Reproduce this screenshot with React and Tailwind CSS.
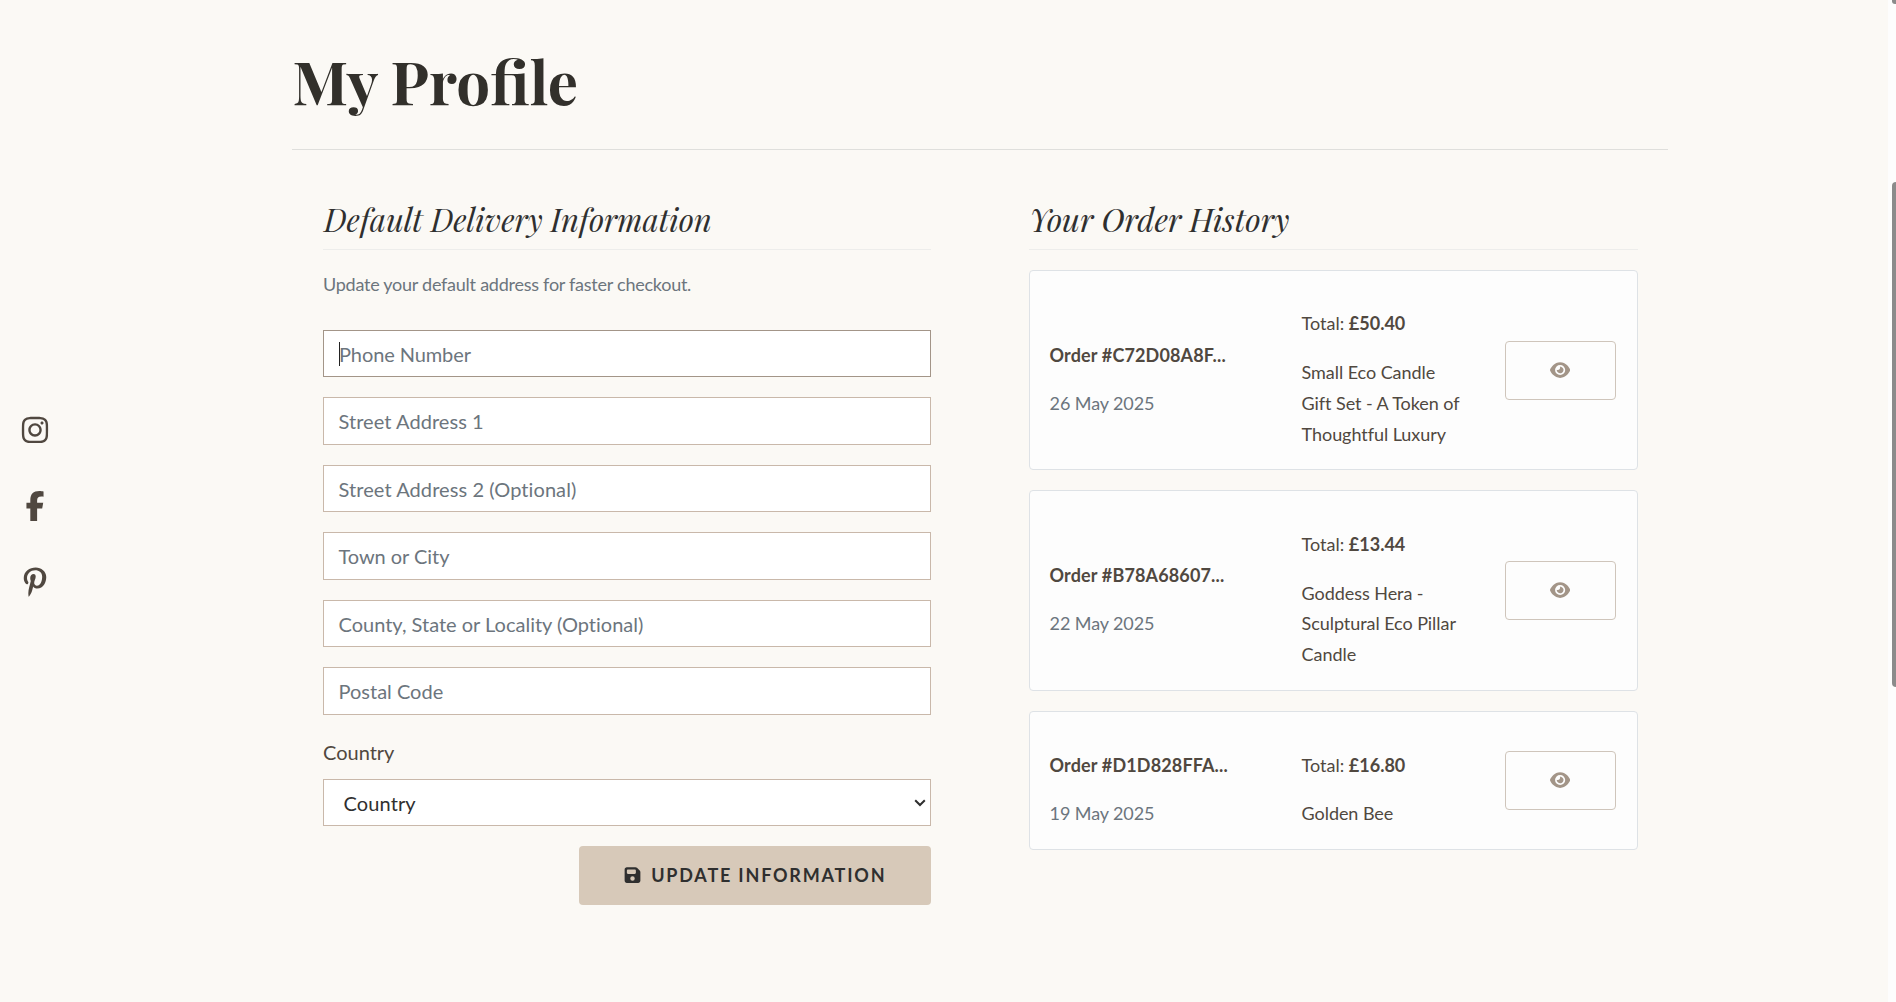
import React from "react";
import { FaInstagram, FaFacebookF, FaPinterestP, FaEye, FaFloppyDisk } from "react-icons/fa6";

const FIELDS = [
  { label: "Phone Number", box: "h-[47px] mb-[20px] border-[#a39588] pl-[15px] tracking-[-0.1px]", focused: true },
  { label: "Street Address 1", box: "h-[48px] mb-[20px] border-[#c9b8aa] pl-[14.5px] tracking-[0.06px]" },
  { label: "Street Address 2 (Optional)", box: "h-[47px] mb-[20px] border-[#c9b8aa] pl-[14.5px] tracking-[0.08px]" },
  { label: "Town or City", box: "h-[48px] mb-[20px] border-[#c9b8aa] pl-[14.5px] tracking-[-0.05px]" },
  { label: "County, State or Locality (Optional)", box: "h-[47px] mb-[20px] border-[#c9b8aa] pl-[14.5px]" },
  { label: "Postal Code", box: "h-[48px] border-[#c9b8aa] pl-[14.5px]" },
];

const ORDERS = [
  { id: "Order #C72D08A8F...", date: "26 May 2025", total: "£50.40", item: "Small Eco Candle Gift Set - A Token of Thoughtful Luxury", h: "h-[200px]" },
  { id: "Order #B78A68607...", date: "22 May 2025", total: "£13.44", item: "Goddess Hera - Sculptural Eco Pillar Candle", h: "h-[201px]" },
  { id: "Order #D1D828FFA...", date: "19 May 2025", total: "£16.80", item: "Golden Bee", h: "h-[139px]" },
];

function Order({ order }) {
  return (
    <article className={"flex items-center rounded-[4px] border border-[#dee2e6] bg-[#fdfdfd] pl-[19.6px] pr-[21px] text-[18px] leading-[30.6px] " + order.h}>
      <div className="w-[252px] pt-[18px]">
        <p className="mb-[17.6px] font-bold tracking-[0.14px]">{order.id}</p>
        <p className="tracking-[-0.1px] text-[#6c757d]">{order.date}</p>
      </div>
      <div className="w-[160px] pt-[17.6px]">
        <p className="mb-[18.4px]">Total: <strong className="font-bold">{order.total}</strong></p>
        <p className="tracking-[-0.06px]">{order.item}</p>
      </div>
      <button className="ml-auto flex h-[59px] w-[111px] items-center justify-center rounded-[4px] border border-[#cfc5bb] pr-[0.75px] pb-px text-[#a39588]">
        <FaEye className="h-[18px] w-[20.25px]" />
      </button>
    </article>
  );
}

function Heading({ children, size }) {
  return (
    <h2 className={"h-[56px] border-b border-[#ededeb] font-['Playfair_Display','Liberation_Serif',serif] leading-[51px] italic text-[#2f2f2f] " + size}>
      {children}
    </h2>
  );
}

export default function App() {
  return (
    <div className="relative flex h-[1002px] w-full overflow-hidden bg-[#fbf9f5] font-['Lato',sans-serif] text-[#504840] [font-variant-ligatures:no-contextual]">
      <nav className="flex w-[292px] shrink-0 flex-col justify-center gap-[46px] pt-[10px] pl-[19.5px] text-[#504840]">
        <a className="flex w-[30px] justify-center"><FaInstagram className="size-[30px]" /></a>
        <a className="flex w-[30px] justify-center"><FaFacebookF className="size-[30px]" /></a>
        <a className="flex w-[30px] justify-center"><FaPinterestP className="size-[30px]" /></a>
      </nav>

      <main className="w-[1376px] shrink-0">
        <header className="h-[150px] border-b border-[#dfdfdc] pt-[44px]">
          <h1 className="pl-[0.5px] font-['Playfair_Display','Liberation_Serif',serif] text-[60px] leading-[72px] font-bold text-[#32302b]">My Profile</h1>
        </header>

        <div className="flex gap-[98px] pt-[44px] pl-[31px] [font-variant-ligatures:none]">
          <section className="w-[608px] shrink-0">
            <Heading size="text-[31.1px] pl-px">Default Delivery Information</Heading>
            <p className="mt-[19px] mb-[30px] text-[18px] leading-[31px] tracking-[-0.25px] text-[#6c757d]">Update your default address for faster checkout.</p>
            {FIELDS.map((f) => (
              <div key={f.label} className={"flex items-center border bg-white text-[20px] text-[#6c757d] " + f.box}>
                {f.focused && <span className="-mr-px h-[24px] w-px bg-[#222]" />}
                <span>{f.label}</span>
              </div>
            ))}
            <label className="mt-[20px] block text-[20px] leading-[34px]">Country</label>
            <div className="mt-[10px] flex h-[47px] items-center justify-between border border-[#c9b8aa] bg-white pl-[19.6px] pr-[4px] text-[20px] tracking-[0.1px] text-[#2f2f2f]">
              <span>Country</span>
              <svg className="h-[8px] w-[12px]" viewBox="0 0 12 8" fill="none" stroke="currentColor" strokeWidth="2"><path d="M1.2 1.2 6 6 10.8 1.2" /></svg>
            </div>
            <button className="mt-[20px] ml-auto flex h-[59px] w-[352px] items-center justify-center rounded-[4px] bg-[#d7c9b9] text-[18px] font-bold tracking-[1.8px] text-[#2f2f2f]">
              <FaFloppyDisk className="mr-[10.5px] mb-px h-[18px] w-[17px]" />
              UPDATE INFORMATION
            </button>
          </section>

          <section className="w-[609px] shrink-0">
            <Heading size="text-[31.6px]">Your Order History</Heading>
            <div className="mt-[20px] flex flex-col gap-[20px]">
              {ORDERS.map((o) => <Order key={o.id} order={o} />)}
            </div>
          </section>
        </div>
      </main>

      <div className="absolute inset-y-0 right-0 w-[4px] bg-[#fdfdfd] outline-4 outline-[#fdfdfd]">
        <div className="relative h-[4px] rounded-bl-[3px] bg-[#8b8b8b]" />
        <div className="relative mt-[178px] h-[505px] rounded-l-[4px] bg-[#8b8b8b]" />
      </div>
    </div>
  );
}
